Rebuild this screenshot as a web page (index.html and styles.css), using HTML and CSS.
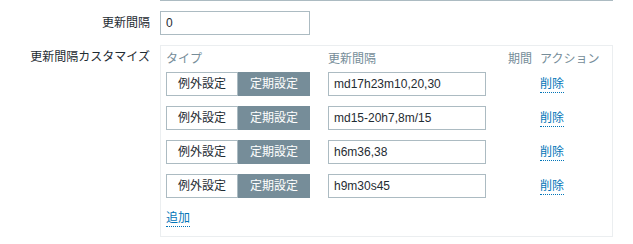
FILE: index.html
```html
<!DOCTYPE html>
<html lang="ja">
<head>
  <meta charset="UTF-8">
  <title>アイテムの設定</title>
  <link rel="stylesheet" href="styles.css">
</head>
<body>
  <div class="form-grid">
    <div class="form-label"></div>
    <div class="form-field"><div class="prev-edge"></div></div>

    <label class="form-label" for="delay">更新間隔</label>
    <div class="form-field"><input id="delay" class="text-input short" type="text" value="0"></div>

    <label class="form-label">更新間隔カスタマイズ</label>
    <div class="form-field">
      <div class="intervals">
        <div class="th">タイプ</div>
        <div class="th">更新間隔</div>
        <div class="th">期間</div>
        <div class="th">アクション</div>

        <div class="td">
          <div class="segmented">
            <span class="seg">例外設定</span>
            <span class="seg active">定期設定</span>
          </div>
        </div>
        <div class="td"><input class="text-input interval" type="text" value="md17h23m10,20,30"></div>
        <div class="td"></div>
        <div class="td"><a class="link" href="#">削除</a></div>

        <div class="td">
          <div class="segmented">
            <span class="seg">例外設定</span>
            <span class="seg active">定期設定</span>
          </div>
        </div>
        <div class="td"><input class="text-input interval" type="text" value="md15-20h7,8m/15"></div>
        <div class="td"></div>
        <div class="td"><a class="link" href="#">削除</a></div>

        <div class="td">
          <div class="segmented">
            <span class="seg">例外設定</span>
            <span class="seg active">定期設定</span>
          </div>
        </div>
        <div class="td"><input class="text-input interval" type="text" value="h6m36,38"></div>
        <div class="td"></div>
        <div class="td"><a class="link" href="#">削除</a></div>

        <div class="td">
          <div class="segmented">
            <span class="seg">例外設定</span>
            <span class="seg active">定期設定</span>
          </div>
        </div>
        <div class="td"><input class="text-input interval" type="text" value="h9m30s45"></div>
        <div class="td"></div>
        <div class="td"><a class="link" href="#">削除</a></div>

        <div class="add-row"><a class="link" href="#">追加</a></div>
      </div>
    </div>
  </div>
</body>
</html>
```

FILE: styles.css
```css
body {
  margin: 0;
  background: #ffffff;
  color: #1f2c33;
  font-family: "Liberation Sans", "Noto Sans CJK JP", sans-serif;
  font-size: 12px;
}

.form-grid {
  display: grid;
  grid-template-columns: 150px 453px;
  column-gap: 10px;
  row-gap: 10px;
  align-items: start;
}

.form-label {
  text-align: right;
  line-height: 24px;
  white-space: nowrap;
}

.prev-edge {
  height: 0;
  border-bottom: 1px solid #acbbc2;
}

.text-input {
  box-sizing: border-box;
  height: 24px;
  margin: 0;
  padding: 0 5px;
  border: 1px solid #acbbc2;
  background: #ffffff;
  color: #1f2c33;
  font-family: "Liberation Sans", "Noto Sans CJK JP", sans-serif;
  font-size: 12px;
  outline: none;
}

.short {
  width: 150px;
}

.interval {
  width: 158px;
  display: block;
}

.intervals {
  box-sizing: border-box;
  width: 453px;
  border: 1px solid #ebeef0;
  padding: 5px 5px 8px 5px;
  display: grid;
  grid-template-columns: 162px 180px 32px 1fr;
}

.th {
  color: #768d99;
  line-height: 16px;
  padding-bottom: 5px;
  white-space: nowrap;
}

.td {
  height: 24px;
  line-height: 24px;
  padding-bottom: 10px;
}

.segmented {
  display: flex;
}

.seg {
  box-sizing: border-box;
  height: 24px;
  line-height: 22px;
  padding: 0 11px;
  border: 1px solid #acbbc2;
  white-space: nowrap;
}

.seg + .seg {
  border-left: none;
}

.seg.active {
  background: #768d99;
  border-color: #768d99;
  border-left: 1px solid #768d99;
  color: #ffffff;
}

.link {
  color: #0275b8;
  text-decoration: none;
  border-bottom: 1px dotted #0275b8;
  padding-bottom: 1px;
}

.add-row {
  grid-column: 1 / -1;
  line-height: 20px;
}
```
